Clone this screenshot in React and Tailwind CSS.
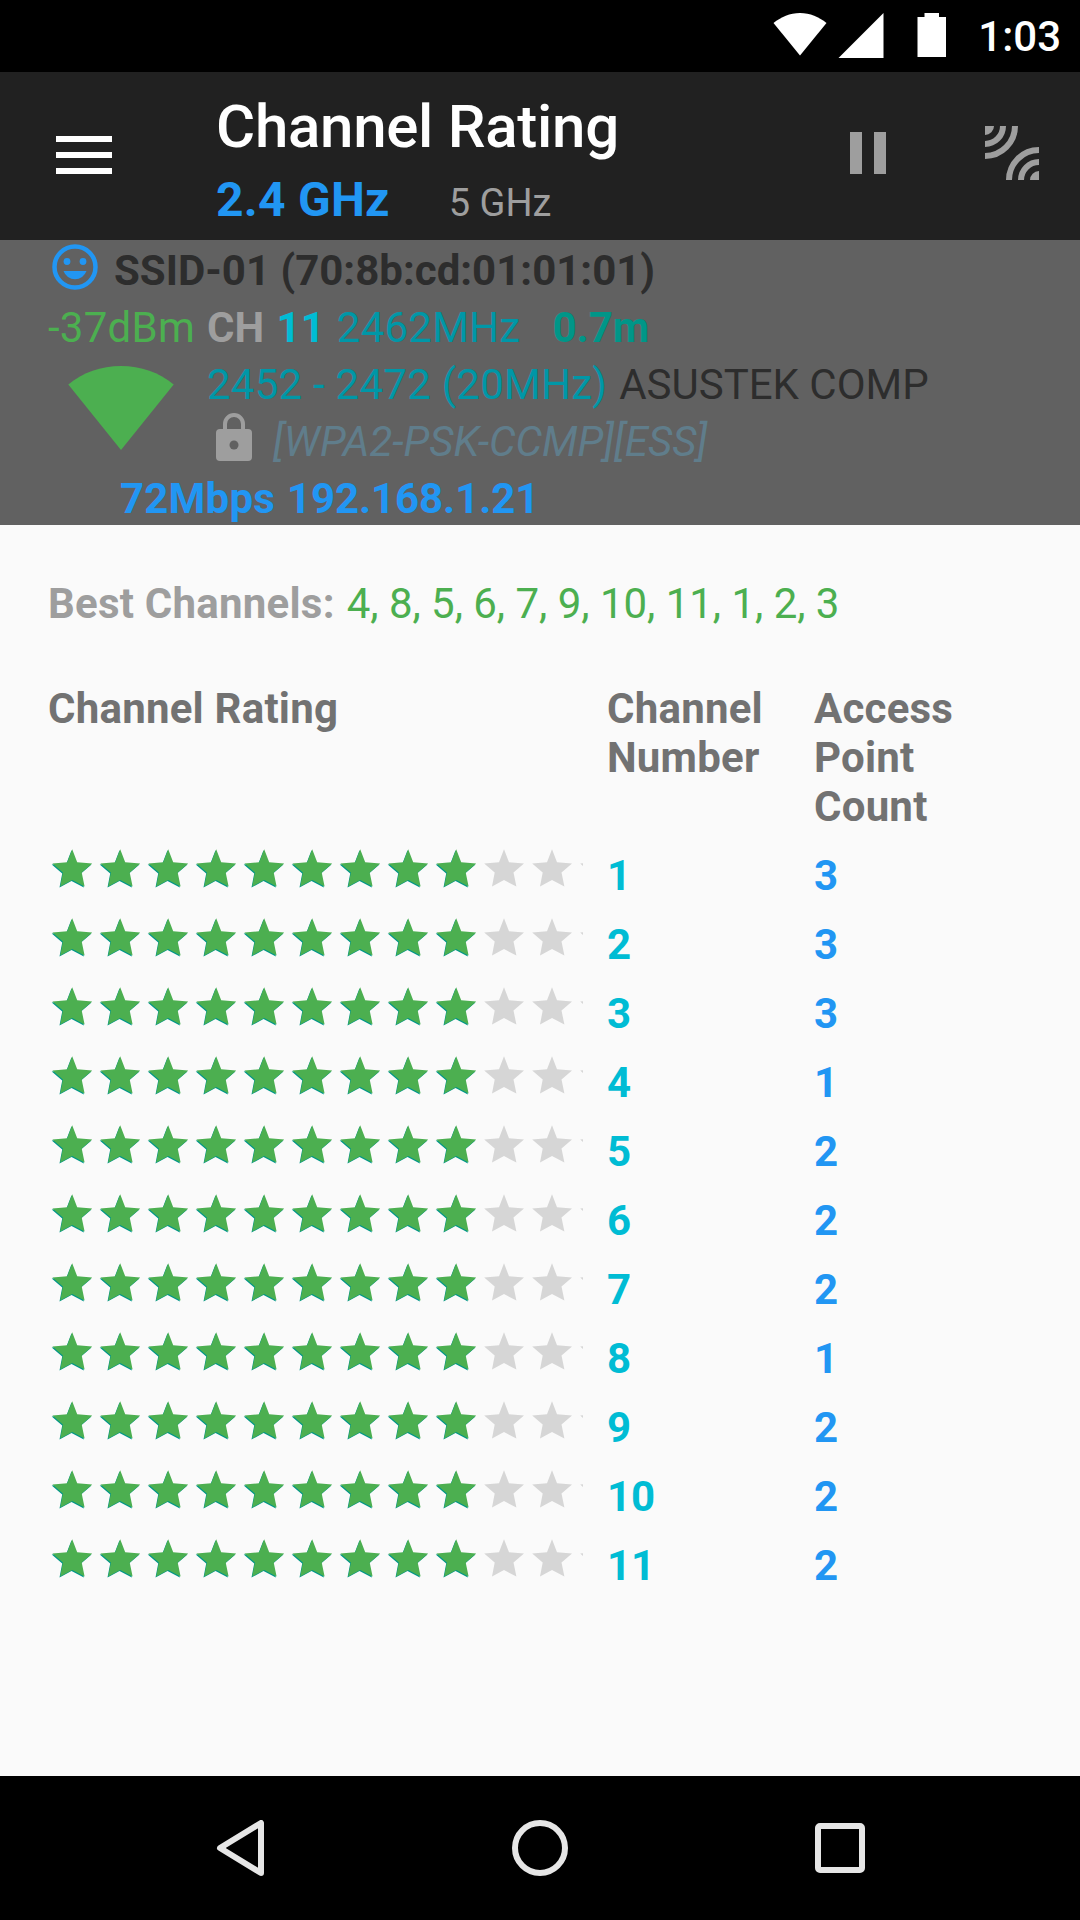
const ratings = [3, 3, 3, 1, 2, 2, 2, 1, 2, 2, 2].map((count, i) => ({ channel: i + 1, count }));

const STAR = "24,5.3 29,18.3 44,19.6 33.5,28.6 36.4,42.6 24,36 12,42.6 14.7,28.6 4.2,19.6 19,18.3";

function Star({ filled }) {
  return (
    <svg className="-mt-px size-12 shrink-0" viewBox="0 0 48 48">
      {filled && <polygon points={STAR} fill="#009688" transform="translate(-0.5 0.9)" />}
      {filled && <polygon points={STAR} fill="#4caf50" transform="translate(0.2 0)" />}
      {!filled && <polygon points={STAR} fill="#d6d6d6" />}
    </svg>
  );
}

function StatusBar() {
  return (
    <div className="flex h-[72px] items-start justify-end bg-black text-white">
      <svg className="mt-[13px] h-[43px] w-[54px]" viewBox="0 0 54 43" fill="#fff">
        <path d="M0.5 10C8 4 17 0 27 0S46 4 53.5 10L27 42.5Z" />
      </svg>
      <svg className="mt-[13px] ml-[11px] h-[45px] w-[46px]" viewBox="0 0 46 45" fill="#fff">
        <path d="M45.500 0V45H0.500Z" />
      </svg>
      <svg className="mt-[13px] ml-[33px] h-11 w-[30px]" viewBox="0 0 30 44" fill="#fff">
        <path d="M7.500 0H22V4H29V44H0.500V4H7.500Z" />
      </svg>
      <span className="mt-3 mr-[19px] ml-[31px] text-[42px] leading-[49px] font-medium">1:03</span>
    </div>
  );
}

function Toolbar() {
  return (
    <header className="flex h-[168px] items-start bg-[#212121]">
      <div className="mt-16 ml-14 flex h-[38px] w-14 flex-col justify-between">
        <span className="h-1.5 bg-white" />
        <span className="h-1.5 bg-white" />
        <span className="h-1.5 bg-white" />
      </div>
      <div className="ml-[104px] flex-1 pt-5">
        <h1 className="text-[60px] leading-[70px] font-medium tracking-[-0.28px] whitespace-nowrap text-white">
          Channel Rating
        </h1>
        <div className="flex items-baseline pt-[3px] leading-[70px] whitespace-nowrap">
          <span className="text-[48px] font-bold tracking-[0.25px] text-[#2196f3]">2.4 GHz</span>
          <span className="ml-[59px] text-[38px] text-[#9e9e9e]">5 GHz</span>
        </div>
      </div>
      <div className="mt-[60px] flex h-[42px] w-9 justify-between">
        <span className="w-3 bg-[#9e9e9e]" />
        <span className="w-3 bg-[#9e9e9e]" />
      </div>
      <svg className="mt-[54px] mr-[41px] ml-[99px] size-[54px]" viewBox="0 0 54 54" fill="none" stroke="#9e9e9e" strokeWidth="6">
        <path d="M18 0A18 18 0 0 1 0 18M30 0A30 30 0 0 1 0 30M54 36A18 18 0 0 0 36 54M54 24A30 30 0 0 0 24 54" />
        <path d="M0 0H9A9 9 0 0 1 0 9ZM54 54V45A9 9 0 0 0 45 54Z" fill="#9e9e9e" stroke="none" />
      </svg>
    </header>
  );
}

function Connection() {
  return (
    <section className="h-[285px] bg-[#616161] pt-0.5 pl-12 text-[42px] leading-[57px] whitespace-pre">
      <div className="flex">
        <svg className="mt-0.5 ml-1 h-[46px] w-[46px] shrink-0" viewBox="0 0 46 46">
          <circle cx="23" cy="23" r="20.500" fill="none" stroke="#2196f3" strokeWidth="4.500" />
          <circle cx="15" cy="17.500" r="3.400" fill="#2196f3" />
          <circle cx="31" cy="17.500" r="3.400" fill="#2196f3" />
          <path d="M11.500 27H34.500A12.200 12.200 0 0 1 11.500 27Z" fill="#2196f3" />
        </svg>
        <span className="ml-4 font-bold text-[#2d2d2d]">SSID-01 (70:8b:cd:01:01:01)</span>
      </div>
      <div className="flex">
        <span className="w-[159px] tracking-[0.25px] text-[#4caf50]">-37dBm</span>
        <span className="font-bold text-[#9e9e9e]">CH </span>
        <span className="ml-0.5 font-bold text-[#00bcd4]">11</span>
        <span className="ml-3 tracking-[0.25px] text-[#0097a7]">2462MHz</span>
        <span className="ml-8 font-bold text-[#009688]">0.7m</span>
      </div>
      <div className="flex">
        <svg className="mt-[9.5px] ml-5 h-[84px] w-[106px] shrink-0" viewBox="0 0 106 84" fill="#4caf50">
          <path d="M0.300 18.500C15 6.500 33 0 53 0S91 6.500 105.700 18.500L53 84Z" />
        </svg>
        <div className="ml-[33px] h-[114px]">
          <div className="flex">
            <span className="tracking-[0.25px] text-[#0097a7]">2452 - 2472 (20MHz)</span>
            <span className="ml-3 text-[#2d2d2d]">ASUSTEK COMP</span>
          </div>
          <div className="flex">
            <svg className="ml-[9px] h-12 w-9 shrink-0" viewBox="0 0 36 48">
              <path d="M9 18V11A9 9 0 0 1 27 11V18" fill="none" stroke="#9e9e9e" strokeWidth="4" />
              <rect y="16" width="36" height="32" rx="4" fill="#9e9e9e" />
              <circle cx="18" cy="32" r="4.500" fill="#616161" />
            </svg>
            <span className="ml-[21px] text-[#607d8b] italic">[WPA2-PSK-CCMP][ESS]</span>
          </div>
        </div>
      </div>
      <div className="flex pl-[72px] font-bold text-[#2196f3]">
        <span className="tracking-[0.2px]">72Mbps</span>
        <span className="ml-3 tracking-[-0.1px]">192.168.1.21</span>
      </div>
    </section>
  );
}

function ChannelTable() {
  return (
    <main className="flex-1 bg-[#fafafa] px-12 text-[42px] leading-[49px]">
      <div className="flex pt-[54px] whitespace-nowrap">
        <span className="font-bold tracking-[0.23px] text-[#9e9e9e]">Best Channels:</span>
        <span className="ml-3 tracking-[-0.03px] text-[#4caf50]">4, 8, 5, 6, 7, 9, 10, 11, 1, 2, 3</span>
      </div>
      <div className="mt-14 grid grid-cols-[559px_207px_190px] font-bold tracking-[0.22px] text-[#727272]">
        <span>Channel Rating</span>
        <span>Channel<br />Number</span>
        <span>Access<br />Point<br />Count</span>
      </div>
      <div className="pt-[14px]">
        {ratings.map(({ channel, count }) => (
          <div key={channel} className="grid h-[69px] grid-cols-[559px_207px_190px] font-bold">
            <div className="flex w-[535px] overflow-hidden">
              {Array.from({ length: 12 }, (_, i) => (
                <Star key={i} filled={i < 9} />
              ))}
            </div>
            <span className="pt-[6px] text-[#00bcd4]">{channel}</span>
            <span className="pt-[6px] text-[#2196f3]">{count}</span>
          </div>
        ))}
      </div>
    </main>
  );
}

function NavigationBar() {
  return (
    <nav className="flex h-36 items-center justify-between bg-black pr-[215px] pl-[215px]">
      <svg className="h-14 w-[50px]" viewBox="0 0 50 56" fill="none" stroke="#e6e6e6" strokeWidth="6" strokeLinejoin="round">
        <path d="M46 3V53L5 28Z" />
      </svg>
      <svg className="size-14" viewBox="0 0 56 56" fill="none" stroke="#e6e6e6" strokeWidth="6">
        <circle cx="28" cy="28" r="25" />
      </svg>
      <span className="size-[50px] rounded-[5px] border-[6px] border-[#e6e6e6]" />
    </nav>
  );
}

export default function App() {
  return (
    <div className="flex h-[1920px] w-[1080px] flex-col overflow-hidden font-[Roboto,sans-serif]">
      <StatusBar />
      <Toolbar />
      <Connection />
      <ChannelTable />
      <NavigationBar />
    </div>
  );
}
